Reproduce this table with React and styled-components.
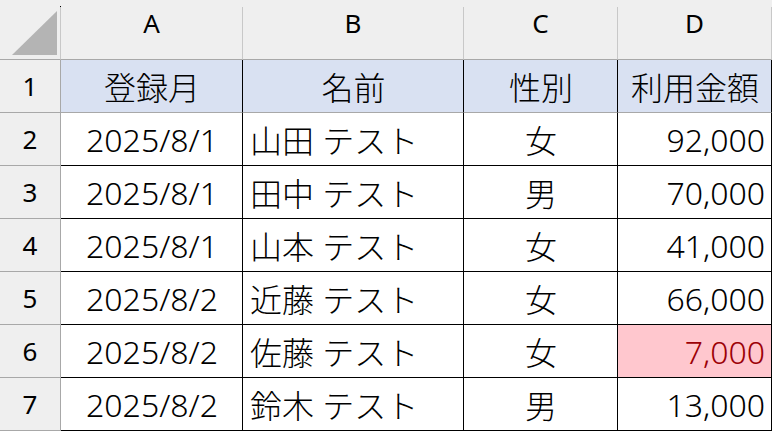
import React from 'react';
import styled, { createGlobalStyle } from 'styled-components';

const GlobalStyle = createGlobalStyle`
  html, body {
    margin: 0;
    padding: 0;
    background: #ffffff;
  }
  * {
    box-sizing: border-box;
  }
`;

const Sheet = styled.div`
  display: grid;
  grid-template-columns: 61px 182px 221px 154px 154px;
  grid-auto-rows: 53px;
  width: 772px;
  padding-top: 7px;
  background: linear-gradient(#efefef 0 7px, #ffffff 7px);
  font-family: "Noto Sans", "Noto Sans CJK JP", sans-serif;
  color: #000;
`;

const Corner = styled.div`
  position: relative;
  background: #efefef;
  border-right: 1px solid #c8c8c8;
  border-bottom: 1px solid #a8a8a8;

  &::before {
    content: '';
    position: absolute;
    right: -1px;
    top: -1px;
    width: 1px;
    height: 1px;
    background: #000;
  }
`;

const Triangle = styled.svg`
  display: block;
  position: absolute;
  left: 0;
  top: 0;
`;

const ColHead = styled.div`
  display: flex;
  align-items: center;
  justify-content: center;
  padding-bottom: 20px;
  background: #efefef;
  border-right: 1px solid #c8c8c8;
  border-bottom: 1px solid #a8a8a8;
  font-size: 26px;
`;

const RowHead = styled.div`
  display: flex;
  align-items: center;
  justify-content: center;
  background: #efefef;
  border-right: 1px solid #a8a8a8;
  border-bottom: 1px solid #a8a8a8;
  font-size: 26px;
`;

const Cell = styled.div`
  display: flex;
  align-items: center;
  justify-content: ${({ $align }) =>
    $align === 'left' ? 'flex-start' : $align === 'right' ? 'flex-end' : 'center'};
  padding: 0 6px 0 7px;
  background: ${({ $bg }) => $bg || '#ffffff'};
  color: ${({ $color }) => $color || '#000'};
  border-right: 1px solid #000;
  border-bottom: 1px solid ${({ $head }) => ($head ? '#a8a8a8' : '#000')};
  font-size: 32px;
  font-weight: 300;
  white-space: nowrap;
`;

const columns = ['A', 'B', 'C', 'D'];
const header = ['登録月', '名前', '性別', '利用金額'];

const rows = [
  ['2025/8/1', '山田 テスト', '女', '92,000'],
  ['2025/8/1', '田中 テスト', '男', '70,000'],
  ['2025/8/1', '山本 テスト', '女', '41,000'],
  ['2025/8/2', '近藤 テスト', '女', '66,000'],
  ['2025/8/2', '佐藤 テスト', '女', '7,000', true],
  ['2025/8/2', '鈴木 テスト', '男', '13,000'],
];

const App = () => (
  <>
    <GlobalStyle />
    <Sheet>
      <Corner>
        <Triangle width="60" height="53" viewBox="0 0 60 53">
          <polygon points="12,48 57,48 57,4" fill="#b4b4b4" />
        </Triangle>
      </Corner>
      {columns.map((c) => (
        <ColHead key={c}>{c}</ColHead>
      ))}

      <RowHead>1</RowHead>
      {header.map((h) => (
        <Cell key={h} $head $bg="#d9e1f2">
          {h}
        </Cell>
      ))}

      {rows.map(([date, name, sex, amount, warn], i) => (
        <React.Fragment key={i}>
          <RowHead>{i + 2}</RowHead>
          <Cell>{date}</Cell>
          <Cell $align="left">{name}</Cell>
          <Cell>{sex}</Cell>
          <Cell $align="right" $bg={warn ? '#ffc7ce' : undefined} $color={warn ? '#9c0006' : undefined}>
            {amount}
          </Cell>
        </React.Fragment>
      ))}
    </Sheet>
  </>
);

export default App;
